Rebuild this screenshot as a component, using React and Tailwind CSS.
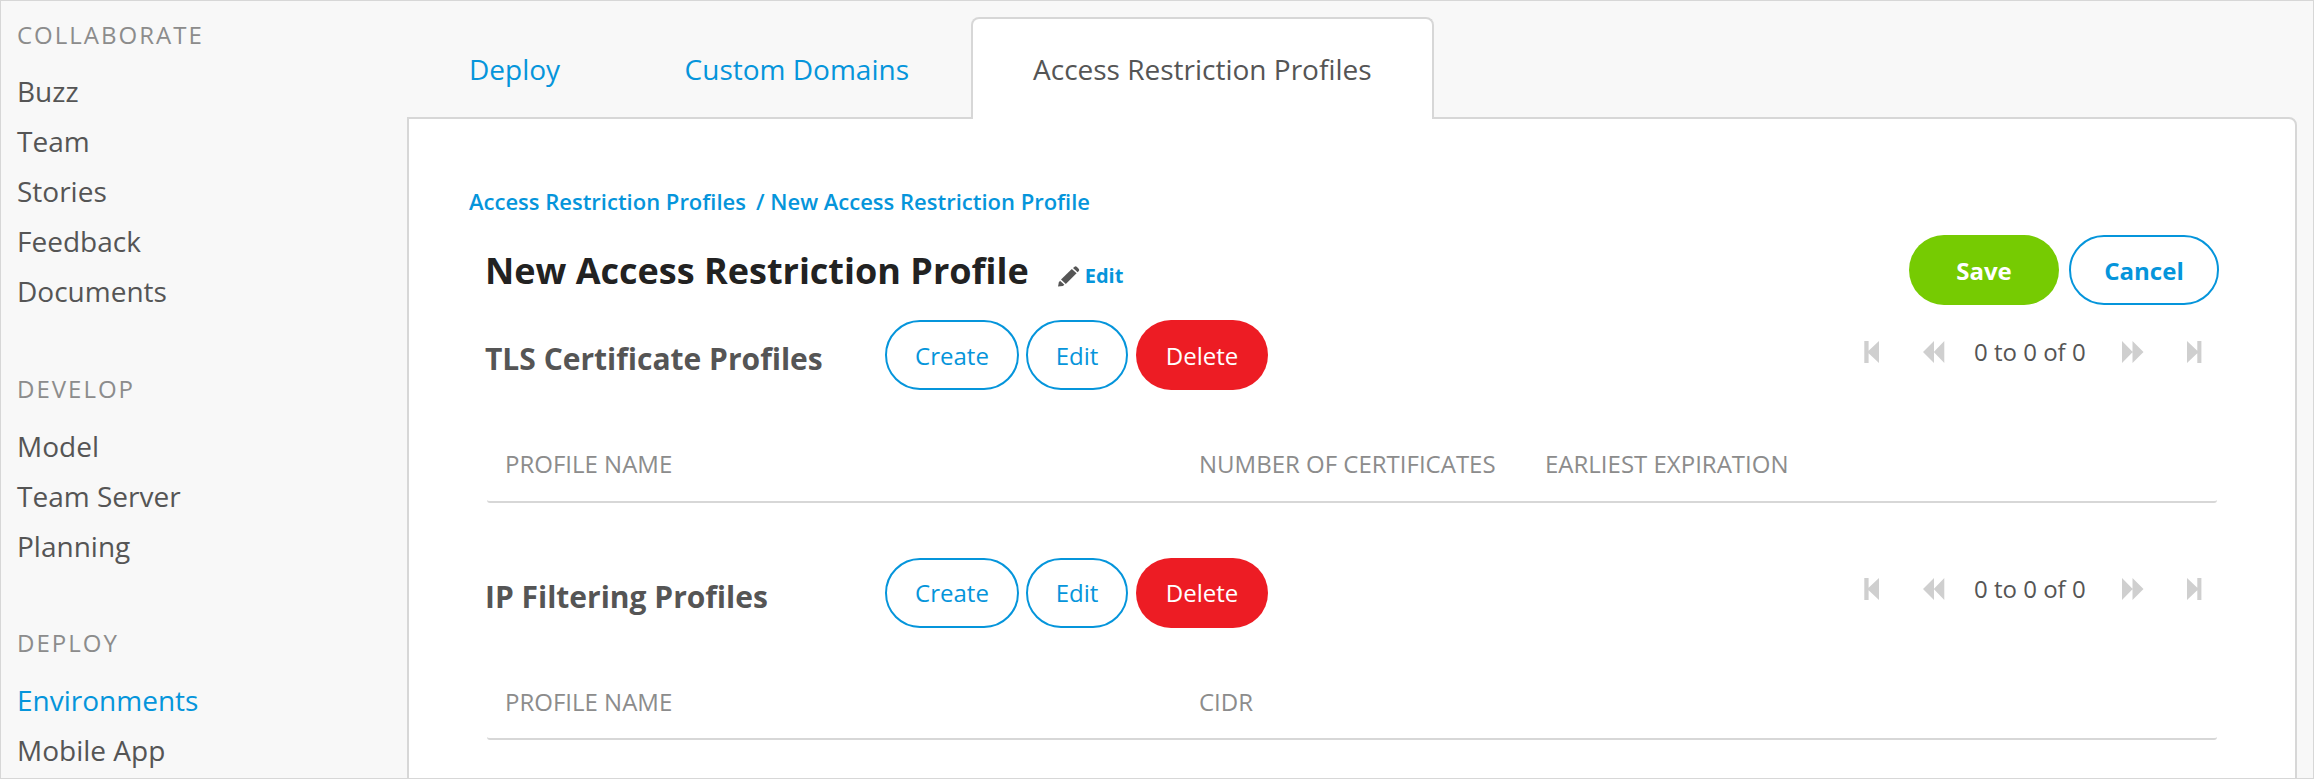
import React from "react";

const navGroups = [
  {
    title: "COLLABORATE",
    spacing: "mb-[6px]",
    items: ["Buzz", "Team", "Stories", "Feedback", "Documents"],
  },
  { title: "DEVELOP", spacing: "mt-[48px] mb-[7px]", items: ["Model", "Team Server", "Planning"] },
  { title: "DEPLOY", spacing: "mt-[47px] mb-[7px]", items: ["Environments", "Mobile App"] },
];

function Sidebar() {
  return (
    <nav className="flex w-[406px] shrink-0 flex-col pt-[9px] pl-4">
      {navGroups.map((group) => (
        <div key={group.title}>
          <h2 className={`${group.spacing} text-[24px] leading-[50px] tracking-[2px] text-[#8c8c8c]`}>{group.title}</h2>
          <ul>
            {group.items.map((item) => (
              <li
                key={item}
                className={
                  item === "Environments"
                    ? "text-[28px] leading-[50px] text-[#0595db]"
                    : "text-[28px] leading-[50px] text-[#555555]"
                }
              >
                {item}
              </li>
            ))}
          </ul>
        </div>
      ))}
    </nav>
  );
}

function Tab({ label, active, className }) {
  return (
    <button
      className={
        active
          ? `h-[102px] rounded-t-lg border-2 border-b-0 border-[#d7d7d7] bg-white text-[28px] text-[#555555] ${className}`
          : `h-[102px] border-2 border-b-0 border-transparent text-[28px] text-[#0595db] ${className}`
      }
    >
      {label}
    </button>
  );
}

function PencilIcon() {
  return (
    <svg className="h-[21px] w-[22px]" viewBox="0 0 22 21" fill="#555555">
      <path d="M2 14.8 L6.4 18.8 L4.8 20 L0 20.6 L0.8 16.6 Z" />
      <path d="M3 13.4 L13.8 3 L18.6 7.2 L7.8 18 Z" />
      <path d="M15 2 L16.6 0.7 Q17.6 0 18.7 0.8 L20.9 2.9 Q21.6 3.9 20.8 4.9 L19.6 6.2 Z" />
    </svg>
  );
}

function PagerIcon({ d, className }) {
  return (
    <svg className={className} viewBox="0 0 22 22" fill="#cfcfcf">
      <path d={d} />
    </svg>
  );
}

function Pager() {
  return (
    <div className="flex h-[34px] items-center text-[24px] text-[#555555]">
      <PagerIcon className="mr-[37px] h-[22px] w-[22px]" d="M0.3 0H4.6V9.8L15 0V22L4.6 12.2V22H0.3Z" />
      <PagerIcon className="mr-[29px] h-[22px] w-[22px]" d="M0 11L11 0V10.8L21.3 0V22L11 11.2V22Z" />
      <span className="w-[112px] whitespace-nowrap">0 to 0 of 0</span>
      <PagerIcon className="ml-[36px] h-[22px] w-[22px]" d="M0 0L10.5 10.8V0L21.5 11L10.5 22V11.2L0 22Z" />
      <PagerIcon className="ml-[43px] h-[22px] w-[22px]" d="M0 0L10.3 9.8V0H14.4V22H10.3V12.2L0 22Z" />
    </div>
  );
}

function ProfileSection({ title, columns, className, buttonsClass, pagerClass, headerClass }) {
  return (
    <section className={className}>
      <div className="flex h-[70px]">
        <h2 className="w-[400px] pt-[6px] text-[30px] leading-[66px] font-bold text-[#555555]">{title}</h2>
        <div className={buttonsClass}>
          <button className="w-[134px] rounded-full border-2 border-[#0595db] pt-[inherit] text-[#0595db]">Create</button>
          <button className="ml-[7px] w-[102px] rounded-full border-2 border-[#0595db] pt-[inherit] text-[#0595db]">
            Edit
          </button>
          <button className="ml-2 w-[132px] rounded-full bg-[#ed1c24] pt-[inherit] text-white">Delete</button>
        </div>
        <div className={pagerClass}>
          <Pager />
        </div>
      </div>
      <div className={headerClass}>
        {columns.map((column, i) => (
          <div key={column} className={i === 0 ? "w-[694px]" : "w-[346px] whitespace-nowrap"}>
            {column}
          </div>
        ))}
      </div>
    </section>
  );
}

export default function App() {
  return (
    <div className="flex h-[779px] w-[2314px] overflow-hidden border border-[#d7d7d7] bg-[#f8f8f8] font-['Open_Sans',sans-serif]">
      <Sidebar />
      <main className="flex w-[1890px] flex-col pt-4">
        <div className="relative z-10 -mb-[2px] flex">
          <Tab label="Deploy" className="px-[60px]" />
          <Tab label="Custom Domains" className="pr-[59.5px] pl-[60.5px]" />
          <Tab label="Access Restriction Profiles" className="px-[60.5px]" active />
        </div>
        <div className="h-[700px] shrink-0 rounded-tr-lg border-2 border-[#d7d7d7] bg-white pr-[76px] pl-[60px]">
          <div className="flex pt-[66px] text-[22px] leading-8 font-semibold whitespace-pre text-[#0595db]">
            <a className="mr-[10px]">Access Restriction Profiles</a>
            <span>/ </span>
            <a>New Access Restriction Profile</a>
          </div>
          <div className="mt-[18px] flex h-[70px] pl-4">
            <h1 className="text-[36px] leading-[72px] font-bold text-[#222222]">New Access Restriction Profile</h1>
            <a className="mt-[25px] ml-[29px] flex h-8 items-center gap-[5px] text-[20px] font-bold text-[#0595db]">
              <PencilIcon />
              Edit
            </a>
            <div className="ml-auto flex gap-[10px] text-[24px] font-bold">
              <button className="w-[150px] rounded-full bg-[#76cb02] pt-[2px] text-white">Save</button>
              <button className="w-[150px] rounded-full border-2 border-[#0595db] pt-[2px] text-[#0595db]">Cancel</button>
            </div>
          </div>
          <ProfileSection
            className="mt-[15px] pl-4"
            buttonsClass="flex text-[24px] [&>button]:pt-[2px]"
            pagerClass="mt-[15px] mr-[10px] ml-auto"
            headerClass="mx-[2px] mt-[49px] flex h-[64px] rounded-[3px] border-b-2 border-[#d7d7d7] pl-[18px] text-[24px] leading-[50px] text-[#8c8c8c]"
            title="TLS Certificate Profiles"
            columns={["PROFILE NAME", "NUMBER OF CERTIFICATES", "EARLIEST EXPIRATION"]}
          />
          <ProfileSection
            className="mt-[55px] pl-4"
            buttonsClass="flex text-[24px]"
            pagerClass="mt-[14px] mr-[10px] ml-auto"
            headerClass="mx-[2px] mt-[49px] flex h-[63px] rounded-[3px] border-b-2 border-[#d7d7d7] pl-[18px] text-[24px] leading-[50px] text-[#8c8c8c]"
            title="IP Filtering Profiles"
            columns={["PROFILE NAME", "CIDR"]}
          />
        </div>
      </main>
    </div>
  );
}
